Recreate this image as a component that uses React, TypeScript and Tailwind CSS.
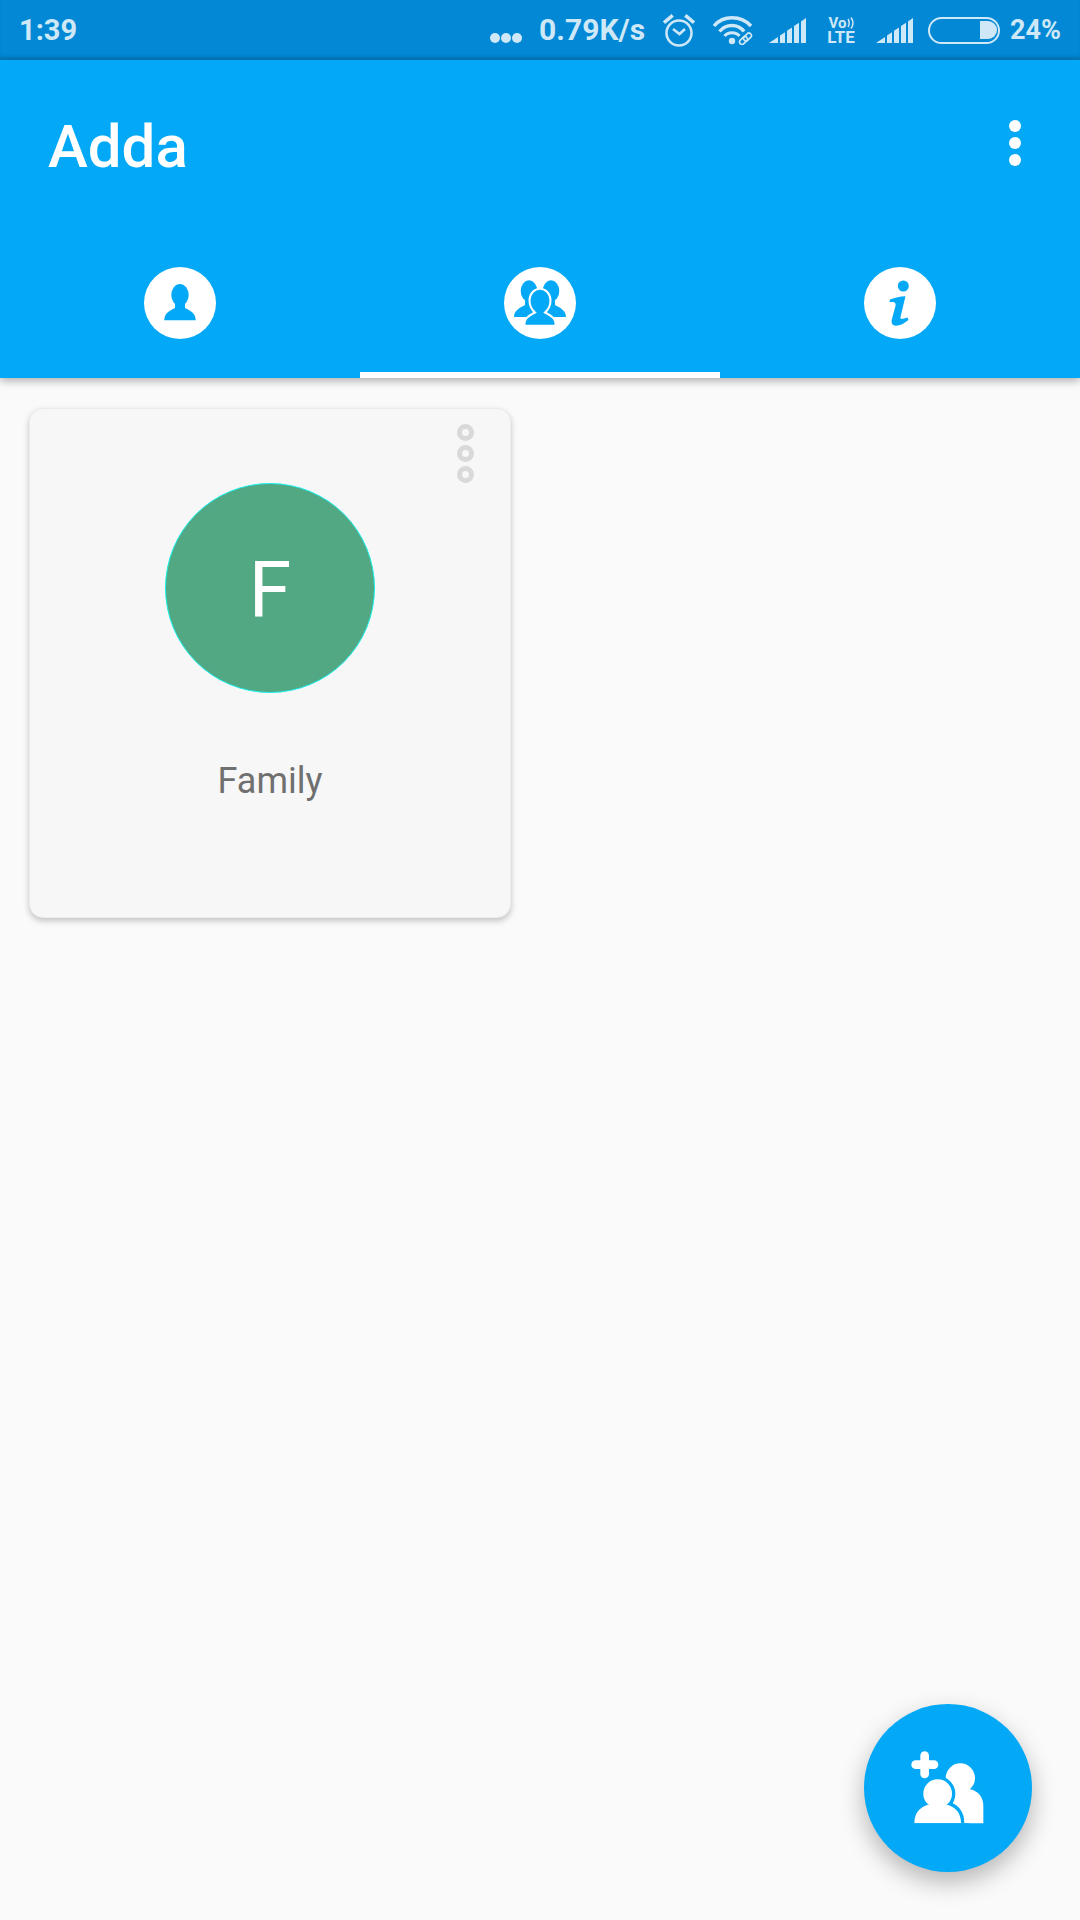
const SignalIcon = () => (
  <svg width="37" height="25" viewBox="0 0 37 25" fill="#cfe8f8">
    <path d="M0 25 L9 18.9 V25 Z" />
    <path d="M11 25 V17.6 L16 14.2 V25 Z" />
    <path d="M18 25 V12.8 L23 9.5 V25 Z" />
    <path d="M25 25 V8.1 L30 4.7 V25 Z" />
    <path d="M32 25 V3.4 L37 0 V25 Z" />
  </svg>
)

const AlarmIcon = () => (
  <svg width="32" height="33" viewBox="0 0 32 33" fill="none" stroke="#cfe8f8">
    <circle cx="16" cy="19" r="12.5" strokeWidth="2.5" />
    <path d="M10 15 L16.5 20 L22 15" strokeWidth="2.5" />
    <path d="M1 8.7 L9.7 1.3" strokeWidth="3.5" />
    <path d="M31 8.7 L22.3 1.3" strokeWidth="3.5" />
  </svg>
)

const WifiIcon = () => (
  <svg width="40" height="29" viewBox="0 0 40 29" fill="none" stroke="#cfe8f8">
    <path d="M1 10 C10 -1 28 -1 38 10" strokeWidth="3.5" />
    <path d="M6.5 15.5 C13 7.5 25 7.5 31 15.5" strokeWidth="3.5" />
    <path d="M11.5 20 C15 15.5 23 15.5 26.5 20" strokeWidth="3" />
    <circle cx="19" cy="25" r="3.2" fill="#cfe8f8" stroke="none" />
    <rect x="32" y="16.5" width="5" height="9" rx="2.5" transform="rotate(45 34.5 21)" strokeWidth="1.6" />
    <rect x="28" y="20" width="5" height="9" rx="2.5" transform="rotate(45 30.5 24.5)" strokeWidth="1.6" />
  </svg>
)

const PersonTab = () => (
  <svg width="72" height="72" viewBox="0 0 72 72">
    <circle cx="36" cy="36" r="36" fill="white" />
    <ellipse cx="36" cy="28" rx="8.7" ry="11" fill="#03a9f6" />
    <path d="M20.3 53.3 C20.3 47 24 44.5 31 41 L31 35 H41 L41 41 C48 44.5 51.7 47 51.7 53.3 Z" fill="#03a9f6" />
  </svg>
)

const GroupTab = () => (
  <svg width="72" height="72" viewBox="0 0 72 72">
    <circle cx="36" cy="36" r="36" fill="white" />
    <g fill="#03a9f6">
      <ellipse cx="25" cy="24" rx="8.3" ry="10.7" />
      <path d="M10 50 C10 44 15 41 21 38 V30 H29 V50 Z" />
      <ellipse cx="47" cy="24" rx="8.3" ry="10.7" />
      <path d="M62 50 C62 44 57 41 51 38 V30 H43 V50 Z" />
    </g>
    <path
      d="M20.3 58.7 C20.3 51 25 48.5 31 45.5 C27 42 25.5 38 25.5 33.5 C25.5 26.5 30.5 21.7 36 21.7 C41.5 21.7 46.5 26.5 46.5 33.5 C46.5 38 45 42 41 45.5 C47 48.5 51.7 51 51.7 58.7 Z"
      fill="#03a9f6"
      stroke="white"
      strokeWidth="2"
    />
  </svg>
)

const InfoTab = () => (
  <svg width="72" height="72" viewBox="0 0 72 72">
    <circle cx="36" cy="36" r="36" fill="white" />
    <circle cx="39.3" cy="19" r="5.5" fill="#03a9f6" />
    <path
      d="M25.3 35 L26 32.5 C31 31 36 29.3 41.5 29.3 L36.5 50 C36 52.5 38 52.5 43.5 50.5 L44.5 53 C40 56.5 36.5 58.7 32 58.7 C28.5 58.7 27 56 27.8 52.5 L31.5 39 C32 36 31 35 28 35 Z"
      fill="#03a9f6"
    />
  </svg>
)

const FabIcon = () => (
  <svg width="84" height="84" viewBox="200 200 252 252">
    <rect x="216" y="243" width="81" height="26" rx="13" fill="white" />
    <rect x="243" y="216" width="26" height="81" rx="13" fill="white" />
    <circle cx="363" cy="296" r="44" fill="white" />
    <path d="M340 330 H392 C418 335 432 355 432 380 V432 H340 Z" fill="white" />
    <g fill="#03a9f6" stroke="#03a9f6" strokeWidth="20">
      <circle cx="295" cy="343" r="43" />
      <path d="M225 432 C225 402 240 384 265 376 H325 C350 384 365 402 365 432 Z" />
    </g>
    <circle cx="295" cy="343" r="43" fill="white" />
    <path d="M225 432 C225 402 240 384 265 376 H325 C350 384 365 402 365 432 Z" fill="white" />
    <rect x="210" y="432" width="180" height="14" fill="#03a9f6" />
  </svg>
)

const tabs = [
  { key: "person", icon: <PersonTab />, active: false },
  { key: "group", icon: <GroupTab />, active: true },
  { key: "info", icon: <InfoTab />, active: false },
]

const App = () => {
  return (
    <div className="relative flex h-[1920px] flex-col overflow-hidden bg-[#fafafa] font-['Roboto',sans-serif]">
      <div className="flex h-[60px] items-center justify-between bg-[#0288d4] pl-[19px] pr-[19px] text-[29px] font-bold leading-none text-[#cfe8f8] shadow-[inset_0_-5px_5px_-3px_rgba(0,0,0,0.18)]">
        <span>1:39</span>
        <div className="flex items-center">
          <div className="mt-[16px] flex gap-[1px]">
            <span className="h-[10px] w-[10px] rounded-full bg-[#cfe8f8]" />
            <span className="h-[10px] w-[10px] rounded-full bg-[#cfe8f8]" />
            <span className="h-[10px] w-[10px] rounded-full bg-[#cfe8f8]" />
          </div>
          <span className="ml-[17px] text-[30px]">0.79K/s</span>
          <div className="ml-[18px]">
            <AlarmIcon />
          </div>
          <div className="ml-[18px]">
            <WifiIcon />
          </div>
          <div className="ml-[16px]">
            <SignalIcon />
          </div>
          <div className="ml-[20px] flex w-[30px] flex-col items-center font-bold">
            <div className="flex items-center text-[15px] leading-[13px]">
              <span>Vo</span>
              <svg width="7" height="12" viewBox="0 0 7 12" fill="none" stroke="#cfe8f8" strokeWidth="1.5">
                <path d="M1 2 C2.5 4.5 2.5 7.5 1 10" />
                <path d="M4 0.5 C6.5 4 6.5 8 4 11.5" />
              </svg>
            </div>
            <span className="text-[17px] leading-[14px]">LTE</span>
          </div>
          <div className="ml-[20px]">
            <SignalIcon />
          </div>
          <div className="ml-[15px] flex h-[27px] w-[72px] items-center justify-end rounded-full border-2 border-[#cfe8f8] pr-[1px]">
            <div className="h-[18px] w-[17px] rounded-r-full bg-[#cfe8f8]" />
          </div>
          <span className="ml-[10px] text-[27px]">24%</span>
        </div>
      </div>

      <header className="relative z-10 flex h-[318px] flex-col bg-[#03a9f6] text-white shadow-[0_3px_8px_rgba(0,0,0,0.3)]">
        <div className="flex h-[170px] items-center justify-between pl-[48px] pr-[59px] pt-[4px]">
          <h1 className="text-[60px] font-medium leading-none">Adda</h1>
          <div className="mb-[8px] flex flex-col gap-[5px]">
            <span className="h-[12px] w-[12px] rounded-full bg-white" />
            <span className="h-[12px] w-[12px] rounded-full bg-white" />
            <span className="h-[12px] w-[12px] rounded-full bg-white" />
          </div>
        </div>
        <div className="grid flex-1 grid-cols-3">
          {tabs.map((tab) => (
            <div key={tab.key} className="flex flex-col items-center pt-[37px]">
              {tab.icon}
              <div className={`mt-auto h-[6px] w-full ${tab.active ? "bg-white" : ""}`} />
            </div>
          ))}
        </div>
      </header>

      <main className="flex-1 pl-[29px] pt-[30px]">
        <div className="relative flex h-[510px] w-[482px] flex-col items-center rounded-[14px] border border-[#ececec] bg-[#f7f7f7] pt-[74px] shadow-[0_3px_6px_rgba(0,0,0,0.22)]">
          <div className="absolute right-[36px] top-[15px] flex flex-col gap-[4px] blur-[0.6px]">
            <span className="h-[17px] w-[17px] rounded-full border-[5px] border-[#d9d9d9]" />
            <span className="h-[17px] w-[17px] rounded-full border-[5px] border-[#d9d9d9]" />
            <span className="h-[17px] w-[17px] rounded-full border-[5px] border-[#d9d9d9]" />
          </div>
          <div className="flex h-[210px] w-[210px] items-center justify-center rounded-full border border-[#19f0ea] bg-[#52a882] pt-[7px] text-[77px] leading-none text-white">
            F
          </div>
          <p className="mt-[68px] text-[36px] leading-[40px] text-[#707070]">Family</p>
        </div>
      </main>

      <button className="absolute left-[864px] top-[1704px] flex h-[168px] w-[168px] items-center justify-center rounded-full bg-[#03a9f6] shadow-[0_10px_24px_rgba(0,0,0,0.28)]">
        <FabIcon />
      </button>
    </div>
  )
}

export default App
